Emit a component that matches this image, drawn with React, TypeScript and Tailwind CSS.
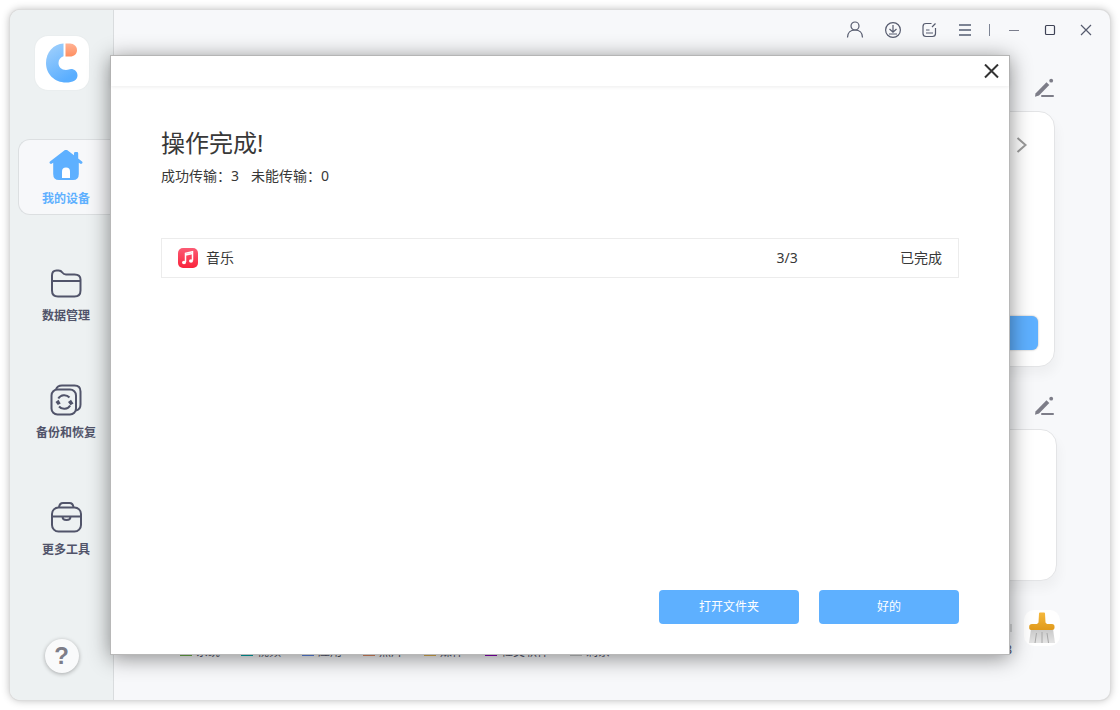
import type { ReactNode } from "react";

const legend = [
  { label: "系统", color: "bg-[#6cb04a]" },
  { label: "视频", color: "bg-[#00a8ac]" },
  { label: "应用", color: "bg-[#5a86e8]" },
  { label: "照片", color: "bg-[#e08a63]" },
  { label: "媒体", color: "bg-[#e0b250]" },
  { label: "社交软件", color: "bg-[#8a00b8]" },
  { label: "剩余", color: "bg-[#c4c6c8]" },
];

const transfers = [{ name: "音乐", count: "3/3", status: "已完成" }];

function Logo() {
  return (
    <div className="flex h-[54px] w-[54px] items-center justify-center rounded-[13px] bg-white shadow-[0_0_2px_rgba(0,0,0,0.06)]">
      <svg width="32" height="40" viewBox="0 0 32 40" aria-label="Logo">
        <defs>
          <linearGradient id="logoBlue" x1="0" y1="0" x2="0.5" y2="1">
            <stop offset="0" stopColor="#a4d2fc" />
            <stop offset="1" stopColor="#5aaeff" />
          </linearGradient>
          <linearGradient id="logoOrange" x1="0" y1="0" x2="0" y2="1">
            <stop offset="0" stopColor="#ffb294" />
            <stop offset="1" stopColor="#ff8f60" />
          </linearGradient>
        </defs>
        <path
          d="M17.500 0.500 C7.500 1 0 9.500 0 20 C0 31 8.500 39.500 20 39.500 C27 39.500 31.500 37 31.500 32.500 C31.500 28.500 28.500 26 25 26 C23 26 22.500 27 20 27 C15.500 27 12.500 24 12.500 20 C12.500 16.500 14.500 14 17.500 13.200 Z"
          fill="url(#logoBlue)"
        />
        <path d="M19.500 0.500 H24 C28 0.500 31 3.500 31 7.200 C31 11 28 13.500 24 13.500 H19.500 Z" fill="url(#logoOrange)" />
      </svg>
    </div>
  );
}

function HomeIcon() {
  return (
    <svg width="34" height="32" viewBox="0 0 34 32">
      <path
        d="M15.300 0.400 Q17 -1 18.700 0.400 L25 5.300 V3.200 Q25 2 26.200 2 H28 Q29.200 2 29.200 3.200 V8.600 L33 11.600 Q34 12.600 33 13.500 Q32 14.200 31 13.600 L29.800 12.800 V24 Q29.800 30 24 30 H10 Q4.200 30 4.200 24 V12.800 L3 13.600 Q2 14.200 1 13.500 Q0 12.600 1 11.600 Z"
        fill="#5eb0ff"
      />
      <path d="M13 28 V21.500 A4 4 0 0 1 21 21.500 V28 Z" fill="#fff" />
    </svg>
  );
}

function FolderIcon() {
  return (
    <svg width="32" height="32" viewBox="0 0 32 32" fill="none" stroke="#51546a" strokeWidth="2">
      <path d="M2 23 V8.500 Q2 3.500 6.500 3.500 H8.500 Q11 3.500 12.300 5.500 Q13.800 7.500 16 7.500 H24.500 Q30.500 7.500 30.500 12.500 V23.500 Q30.500 29.500 24.500 29.500 H8 Q2 29.500 2 23.500 Z" />
      <path d="M2 14 H30.500" />
    </svg>
  );
}

function BackupIcon() {
  return (
    <svg width="32" height="32" viewBox="0 0 32 32" fill="none" stroke="#51546a" strokeWidth="2">
      <rect x="1.500" y="5.500" width="24.500" height="25" rx="6" />
      <path d="M6 5.500 Q7.200 1.500 12 1.500 H24.500 Q30.500 1.500 30.500 7.500 V20.500 Q30.500 25.500 26 26.500" />
      <path d="M8.300 14.500 A7 7 0 0 1 19.500 13.500 M20.200 21.500 A7 7 0 0 1 9 22.500" />
      <path d="M5.500 18 L8.500 15.800 L10.700 19.500 L7.800 21 Z M23.500 19.500 L20.500 21.200 L18 18 L21 15.800 Z" fill="#51546a" stroke="none" />
    </svg>
  );
}

function ToolsIcon() {
  return (
    <svg width="32" height="32" viewBox="0 0 32 32" fill="none" stroke="#51546a" strokeWidth="2">
      <rect x="2" y="6.500" width="29" height="24" rx="6.500" />
      <path d="M9 6.500 Q9.500 2 13 2 H19.500 Q23 2 23.500 6.500" />
      <path d="M2 15.500 H31 M12.500 15.500 Q12.500 19 16.500 19 Q20.500 19 20.500 15.500" />
    </svg>
  );
}

function EditIcon() {
  return (
    <svg width="20" height="20" viewBox="0 0 20 20">
      <path d="M0.500 15.500 L11.500 4.200 L14.300 7 L4 17.500 L0 18.800 Z" fill="#7d7d88" />
      <circle cx="16.200" cy="2.700" r="1.900" fill="#7d7d88" />
      <path d="M7 18 H18" stroke="#7d7d88" strokeWidth="2" strokeLinecap="round" />
    </svg>
  );
}

function BroomIcon() {
  return (
    <svg width="28" height="32" viewBox="0 0 28 32">
      <defs>
        <linearGradient id="broomGold" x1="0" y1="0" x2="0" y2="1">
          <stop offset="0" stopColor="#f5b83c" />
          <stop offset="1" stopColor="#e09a1c" />
        </linearGradient>
        <linearGradient id="broomGray" x1="0" y1="0" x2="0" y2="1">
          <stop offset="0" stopColor="#c8c8c8" />
          <stop offset="1" stopColor="#e4e4e4" />
        </linearGradient>
      </defs>
      <path d="M3 17 H25 L27 31 H1 Z" fill="url(#broomGray)" />
      <path d="M8.500 21 L7 31 M14 20 V31 M19 21 L20.500 31" stroke="#a8a8a8" strokeWidth="1" />
      <path
        d="M11 1.500 Q11 0.500 12 0.500 H16 Q17 0.500 17 1.500 L17.500 10.500 L19 12 H24 Q26.500 12 26.500 14.500 V16 Q26.500 18 24 18 H4 Q1.200 18 1.200 16 V14.500 Q1.200 12 4 12 H9 L10.500 10.500 Z"
        fill="url(#broomGold)"
      />
    </svg>
  );
}

function MusicIcon() {
  return (
    <svg width="20" height="20" viewBox="0 0 20 20">
      <defs>
        <linearGradient id="musicRed" x1="0" y1="0" x2="0" y2="1">
          <stop offset="0" stopColor="#fb5b74" />
          <stop offset="1" stopColor="#fa233b" />
        </linearGradient>
      </defs>
      <rect width="20" height="20" rx="5" fill="url(#musicRed)" />
      <path d="M7.500 14 V5.300 L14.500 3.800 V12.500 M7.500 7 L14.500 5.500" fill="none" stroke="#fff" strokeWidth="1.500" />
      <ellipse cx="6" cy="14.500" rx="2" ry="1.700" fill="#fff" />
      <ellipse cx="13" cy="13" rx="2" ry="1.700" fill="#fff" />
    </svg>
  );
}

function NavItem({ icon, label, active }: { icon: ReactNode; label: string; active?: boolean }) {
  return (
    <a
      href="#"
      aria-current={active ? "page" : undefined}
      className={`flex h-[76px] flex-col items-center border border-r-0 pt-[10px] text-xs font-bold ${
        active ? "rounded-l-xl border-[#dcdfe1] bg-[#f7f8fa] text-[#5eb0ff]" : "border-transparent text-[#51546a]"
      }`}
    >
      {icon}
      <span className="mt-2 leading-[18px]">{label}</span>
    </a>
  );
}

function BarButton({ label, children }: { label: string; children: ReactNode }) {
  return (
    <button type="button" aria-label={label} className="flex h-10 w-9 items-center justify-center">
      <svg width="20" height="20" viewBox="0 0 20 20" fill="none" stroke="#565b6e" strokeWidth="1.200">
        {children}
      </svg>
    </button>
  );
}

function TitleBar() {
  return (
    <header className="flex h-10 items-center justify-end pr-[6px]">
      <div className="flex gap-px">
        <BarButton label="账户">
          <circle cx="11" cy="6" r="4" />
          <path d="M3.500 17.500 C3.500 12.500 6.500 10 11 10 C15.500 10 18.500 12.500 18.500 17.500" />
        </BarButton>
        <BarButton label="下载">
          <circle cx="12" cy="10" r="7.400" />
          <path d="M12 5 V12 M8.500 9 L12 12.300 L15.500 9 M8 14 H16" />
        </BarButton>
        <BarButton label="反馈">
          <path d="M13.500 3.500 H8 Q5 3.500 5 6.500 V13.500 Q5 16.500 8 16.500 H14.500 Q17.500 16.500 17.500 13.500 V8 M14 7 L17.500 3.500 M8 10 H11.500 M8 13 H15" />
        </BarButton>
        <BarButton label="菜单">
          <path d="M4 5 H16 M4 10 H16 M4 15 H16" stroke="#7d8494" strokeWidth="1.800" />
        </BarButton>
      </div>
      <span className="mx-[6px] h-3 w-px bg-[#7d8494]" />
      <BarButton label="最小化">
        <path d="M5 10.500 H15" stroke="#7a7d8c" strokeWidth="1" />
      </BarButton>
      <BarButton label="最大化">
        <rect x="5.500" y="5.500" width="9" height="9" rx="1" stroke="#3f4356" />
      </BarButton>
      <BarButton label="关闭">
        <path d="M5 5 L15 15 M15 5 L5 15" />
      </BarButton>
    </header>
  );
}

function SectionHead() {
  return (
    <div className="flex h-7 items-center justify-end pr-[5px]">
      <button type="button" aria-label="编辑">
        <EditIcon />
      </button>
    </div>
  );
}

function DevicePage() {
  return (
    <main className="min-w-0 flex-1">
      <TitleBar />
      <div className="mt-6 pl-[66px] pr-[50px]">
        <SectionHead />
        <section className="mr-[5px] mt-[9px] flex min-h-[256px] flex-col items-end justify-between rounded-2xl border border-[#e3e4e6] bg-white p-4 shadow-[2px_8px_12px_rgba(0,0,0,0.04)]">
          <button type="button" aria-label="下一页" className="mr-[10px] mt-2">
            <svg width="12" height="18" viewBox="0 0 12 18" fill="none" stroke="#9b9b9b" strokeWidth="2">
              <path d="M1.500 2 L9.500 9 L1.500 16" />
            </svg>
          </button>
          <button
            type="button"
            aria-label="传输"
            className="h-[34px] w-[140px] rounded-md bg-[#5eb0ff] shadow-[0_0_2px_rgba(0,0,0,0.35)]"
          />
        </section>

        <div className="mt-[25px]">
          <SectionHead />
        </div>
        <section className="mr-[3px] mt-[9px] min-h-[152px] rounded-2xl border border-[#e3e4e6] bg-white shadow-[2px_8px_12px_rgba(0,0,0,0.04)]" />

        {/* Storage */}
        <section className="mt-[29px] flex items-start gap-3">
          <div className="min-w-0 flex-1 pt-[14px]">
            <div className="h-2 bg-[#d5d7d9]" />
            <div className="mt-[9px] flex items-start justify-between whitespace-nowrap text-xs leading-[18px] text-[#51546a]">
              <ul className="flex gap-[21px] pt-0.5">
                {legend.map((item) => (
                  <li key={item.label} className="flex items-center gap-1">
                    <span className={`h-2 w-3 ${item.color}`} />
                    {item.label}
                  </li>
                ))}
              </ul>
              <span>31.92 GB/59.59 GB</span>
            </div>
          </div>
          <button
            type="button"
            aria-label="清理"
            className="flex h-9 w-9 items-center justify-center rounded-[10px] bg-white"
          >
            <BroomIcon />
          </button>
        </section>
      </div>
    </main>
  );
}

function ResultDialog() {
  return (
    <div
      role="dialog"
      aria-labelledby="result-title"
      className="flex flex-1 flex-col border border-[#b8b8b8] bg-white text-sm text-[#383838] shadow-[0_3px_20px_rgba(0,0,0,0.45)]"
    >
      <div className="flex h-[30px] items-center justify-end px-[10px] shadow-[0_1px_4px_rgba(0,0,0,0.08)]">
        <button type="button" aria-label="关闭">
          <svg width="15" height="15" viewBox="0 0 15 15" stroke="#333" strokeWidth="2">
            <path d="M1 0.500 L14 13.500 M14 0.500 L1 13.500" />
          </svg>
        </button>
      </div>

      <div className="flex flex-1 flex-col px-[50px] pb-[30px] pt-[39px]">
        <h1 id="result-title" className="text-2xl leading-9">
          操作完成!
        </h1>
        <p className="mt-[3px] flex gap-3 leading-6">
          <span>成功传输：3</span>
          <span>未能传输：0</span>
        </p>

        <table className="mt-[50px] w-full border border-[#ececec]">
          <tbody>
            {transfers.map((t) => (
              <tr key={t.name} className="h-[39px]">
                <td className="pl-4">
                  <div className="flex items-center gap-2">
                    <MusicIcon />
                    {t.name}
                  </div>
                </td>
                <td className="w-[112px]">{t.count}</td>
                <td className="w-[70px] pr-4 text-right">{t.status}</td>
              </tr>
            ))}
          </tbody>
        </table>

        <div className="mt-auto flex justify-end gap-5 text-xs text-white">
          <button type="button" className="h-[34px] w-[140px] rounded bg-[#5eb0ff]">
            打开文件夹
          </button>
          <button type="button" className="h-[34px] w-[140px] rounded bg-[#5eb0ff]">
            好的
          </button>
        </div>
      </div>
    </div>
  );
}

export default function App() {
  return (
    <div className="flex min-h-screen bg-white p-[10px] font-['Noto_Sans','Noto_Sans_CJK_SC',sans-serif]">
      <div className="relative flex flex-1 rounded-[10px] bg-[#f7f8fa] shadow-[0_0_0_1px_#dcdcdc,0_0_8px_rgba(0,0,0,0.3)]">
        <aside className="flex w-[104px] shrink-0 flex-col rounded-l-[10px] border-r border-[#d9dcde] bg-[#edf1f2] pb-[27px] pt-[26px]">
          <div className="flex justify-center">
            <Logo />
          </div>
          <nav className="ml-2 mt-[49px] flex flex-col gap-[41px]">
            <NavItem icon={<HomeIcon />} label="我的设备" active />
            <NavItem icon={<FolderIcon />} label="数据管理" />
            <NavItem icon={<BackupIcon />} label="备份和恢复" />
            <NavItem icon={<ToolsIcon />} label="更多工具" />
          </nav>
          <div className="mt-auto flex justify-center">
            <button
              type="button"
              aria-label="帮助"
              className="flex h-[34px] w-[34px] items-center justify-center rounded-full bg-[#f9fafb] font-['Liberation_Sans',sans-serif] text-2xl font-bold text-[#7d7d88] shadow-[0_1px_4px_rgba(0,0,0,0.3)]"
            >
              ?
            </button>
          </div>
        </aside>

        <DevicePage />

        <div className="absolute inset-0 flex px-[100px] py-[45px]">
          <ResultDialog />
        </div>
      </div>
    </div>
  );
}
